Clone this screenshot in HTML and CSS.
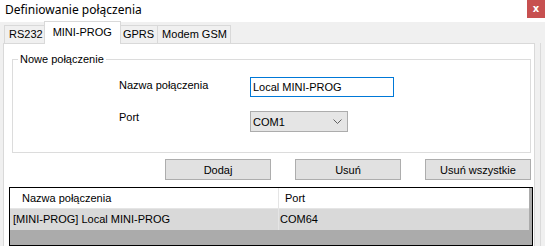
FILE: index.html
```html
<!DOCTYPE html>
<html lang="pl">
<head>
    <meta charset="UTF-8">
    <title>Definiowanie połączenia</title>
    <link rel="stylesheet" href="styles.css">
</head>
<body>
    <div class="titlebar">
        <span class="title">Definiowanie połączenia</span>
        <span class="close">x</span>
    </div>
    <div class="client">
        <div class="tabs">
            <ul class="strip">
                <li>RS232</li>
                <li class="active">MINI-PROG</li>
                <li>GPRS</li>
                <li>Modem GSM</li>
            </ul>
            <div class="page">
                <fieldset class="group">
                    <legend>Nowe połączenie</legend>
                    <div class="form">
                        <label class="lbl lbl-name">Nazwa połączenia</label>
                        <div class="textbox">Local MINI-PROG</div>
                        <label class="lbl lbl-port">Port</label>
                        <div class="combo">
                            <span>COM1</span>
                            <svg width="9" height="5" viewBox="0 0 9 5"><path d="M0.5 0.5 L4.5 4.5 L8.5 0.5" fill="none" stroke="#606060" stroke-width="1"/></svg>
                        </div>
                    </div>
                </fieldset>
                <div class="buttons">
                    <button class="btn">Dodaj</button>
                    <button class="btn">Usuń</button>
                    <button class="btn">Usuń wszystkie</button>
                </div>
                <div class="list">
                    <div class="row head">
                        <div class="cell c1">Nazwa połączenia</div>
                        <div class="cell c2">Port</div>
                    </div>
                    <div class="row sel">
                        <div class="cell c1">[MINI-PROG] Local MINI-PROG</div>
                        <div class="cell c2">COM64</div>
                    </div>
                </div>
            </div>
        </div>
        <div class="edge"></div>
    </div>
</body>
</html>
```
FILE: styles.css
```css
html,body{
    margin: 0;
    width: 545px;
    height: 246px;
    overflow: hidden;
    background: #f0f0f0;
    font-family: "Liberation Sans", Arial, sans-serif;
    font-size: 11px;
    color: #000;
}

.titlebar{
    height: 22px;
    background: #fff;
    display: flex;
    justify-content: space-between;
    align-items: flex-start;
}
.titlebar .title{
    font-family: "Segoe UI", "Noto Sans", sans-serif;
    font-size: 12px;
    line-height: 18px;
    padding-left: 5px;
    padding-top: 1px;
}
.titlebar .close{
    width: 18px;
    height: 18px;
    background: #c75050;
    color: #fff;
    font-family: "DejaVu Sans", sans-serif;
    font-weight: bold;
    font-size: 10px;
    line-height: 17px;
    text-align: center;
}

.client{
    display: flex;
    height: 224px;
}
.tabs{
    margin-left: 3px;
    width: 532px;
}
.edge{
    margin-left: 5px;
    margin-top: 21px;
    border-left: 1px solid #dadada;
}
.strip{
    list-style: none;
    margin: 0;
    padding: 0 0 0 1px;
    height: 21px;
    display: flex;
    align-items: flex-end;
}
.strip li{
    height: 17px;
    line-height: 17px;
    padding: 0 3px 0 4px;
    border: 1px solid #d9d9d9;
    border-bottom: none;
    margin-left: -1px;
    background: #f0f0f0;
    position: relative;
}
.strip li:first-child{
    margin-left: 0;
}
.strip li.active{
    height: 22px;
    line-height: 20px;
    margin: 0 -2px -1px -3px;
    padding: 0 8px 0 8px;
    background: #fff;
    z-index: 1;
}
.page{
    background: #fff;
    border: 1px solid #d9d9d9;
    border-bottom: none;
    height: 202px;
    display: flex;
    flex-direction: column;
}

.group{
    margin: 9px 3px 0 8px;
    padding: 0 0 20px 0;
    border: 1px solid #dcdcdc;
    min-width: 0;
}
.group legend{
    margin-left: 5px;
    padding: 0 2px;
    line-height: 13px;
}
.form{
    display: grid;
    grid-template-columns: 131px 144px;
    grid-template-rows: 20px 21px;
    row-gap: 14px;
    padding: 11px 0 0 106px;
}
.lbl{
    line-height: 13px;
}
.lbl-name{
    padding-top: 2px;
}
.lbl-port{
    padding-top: 0;
}
.textbox{
    border: 1px solid #0078d7;
    line-height: 18px;
    padding-left: 2px;
}
.combo{
    width: 98px;
    border: 1px solid #acacac;
    background: #e5e5e5;
    display: flex;
    align-items: center;
    justify-content: space-between;
    padding: 0 5px 0 2px;
    box-sizing: border-box;
}

.buttons{
    display: flex;
    gap: 24px;
    margin: 6px 0 0 161px;
}
.btn{
    width: 106px;
    height: 21px;
    padding: 0;
    background: #e1e1e1;
    border: 1px solid #adadad;
    font-family: "Liberation Sans", Arial, sans-serif;
    font-size: 11px;
    color: #000;
}

.list{
    margin: 7px 0 0 5px;
    width: 522px;
    flex: 1;
    border: 1px solid #000;
    background: #ababab;
}
.row{
    display: flex;
    width: 519px;
    height: 20px;
    line-height: 20px;
}
.row.head{
    background: #fff;
}
.row.sel{
    background: #d9d9d9;
    height: 21px;
    line-height: 21px;
    border-top: 1px solid #e5e5e5;
}
.cell{
    white-space: nowrap;
    overflow: hidden;
}
.c1{
    width: 268px;
    border-right: 1px solid #e5e5e5;
}
.c2{
    flex: 1;
}
.head .c1{
    padding-left: 12px;
    width: 256px;
}
.head .c2{
    padding-left: 6px;
}
.sel .c1{
    padding-left: 3px;
    width: 265px;
}
.sel .c2{
    padding-left: 1px;
}
```
